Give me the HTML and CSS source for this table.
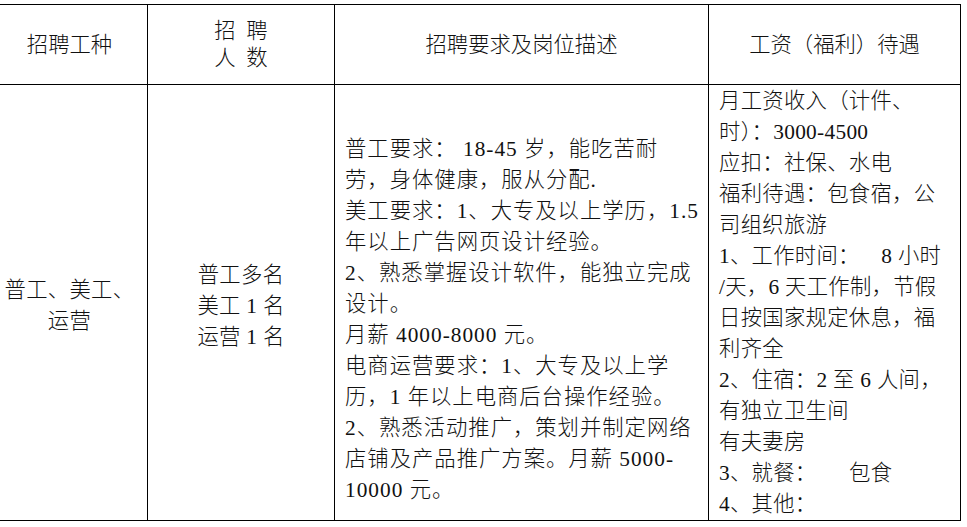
FILE: index.html
```html
<!DOCTYPE html>
<html lang="zh-CN">
<head>
<meta charset="utf-8">
<title>招聘信息</title>
<link rel="stylesheet" href="styles.css">
</head>
<body>
<table class="jobs">
  <colgroup>
    <col class="c1">
    <col class="c2">
    <col class="c3">
    <col class="c4">
  </colgroup>
  <thead>
    <tr class="head">
      <th>招聘工种</th>
      <th class="two"><div>招&ensp;聘</div><div>人&ensp;数</div></th>
      <th>招聘要求及岗位描述</th>
      <th>工资（福利）待遇</th>
    </tr>
  </thead>
  <tbody>
    <tr class="body">
      <td class="kind"><div>普工、美工、</div><div>运营</div></td>
      <td class="count"><div>普工多名</div><div>美工 1 名</div><div>运营 1 名</div></td>
      <td class="desc">
        <div>普工要求： 18-45 岁，能吃苦耐</div>
        <div>劳，身体健康，服从分配.</div>
        <div>美工要求：1、大专及以上学历，1.5</div>
        <div>年以上广告网页设计经验。</div>
        <div>2、熟悉掌握设计软件，能独立完成</div>
        <div>设计。</div>
        <div>月薪 4000-8000 元。</div>
        <div>电商运营要求：1、大专及以上学</div>
        <div>历，1 年以上电商后台操作经验。</div>
        <div>2、熟悉活动推广，策划并制定网络</div>
        <div>店铺及产品推广方案。月薪 5000-</div>
        <div>10000 元。</div>
      </td>
      <td class="pay">
        <div>月工资收入（计件、</div>
        <div>时）：3000-4500</div>
        <div>应扣：社保、水电</div>
        <div>福利待遇：包食宿，公</div>
        <div>司组织旅游</div>
        <div>1、工作时间：&emsp;8 小时</div>
        <div>/天，6 天工作制，节假</div>
        <div>日按国家规定休息，福</div>
        <div>利齐全</div>
        <div>2、住宿：2 至 6 人间，</div>
        <div>有独立卫生间</div>
        <div>有夫妻房</div>
        <div>3、就餐：&emsp;&ensp;包食</div>
        <div>4、其他：</div>
      </td>
    </tr>
  </tbody>
</table>
</body>
</html>
```

FILE: styles.css
```css
html, body {
  margin: 0;
  padding: 0;
  background: #fff;
}

body {
  font-family: "Liberation Serif", "Noto Sans CJK SC", serif;
  font-size: 21.33px;
  font-weight: 300;
  color: #111;
  overflow: hidden;
}

.jobs {
  border-collapse: collapse;
  table-layout: fixed;
  width: 969px;
  margin: 4px 0 0 -9px;
}

.c1 { width: 156px; }
.c2 { width: 187px; }
.c3 { width: 374px; }
.c4 { width: 252px; }

.jobs th,
.jobs td {
  border: 1px solid #000;
  padding: 0;
  white-space: nowrap;
  overflow: hidden;
}

.head {
  height: 80px;
}

.head th {
  font-weight: 300;
  text-align: center;
  vertical-align: middle;
  line-height: 28px;
  padding-top: 1px;
}

.head th.two {
  line-height: 27px;
  padding-top: 0;
}

.body {
  height: 436px;
}

.body td {
  line-height: 31px;
  letter-spacing: 0.3px;
}

.kind,
.count {
  text-align: center;
  vertical-align: middle;
}

.body td.kind {
  padding: 6px 0 0 0;
}

.body td.count {
  padding-top: 8px;
}

.body td.desc {
  vertical-align: top;
  letter-spacing: 1px;
  padding: 49px 0 0 10px;
}

.body td.pay {
  vertical-align: top;
  padding: 1px 0 0 10px;
}
```
